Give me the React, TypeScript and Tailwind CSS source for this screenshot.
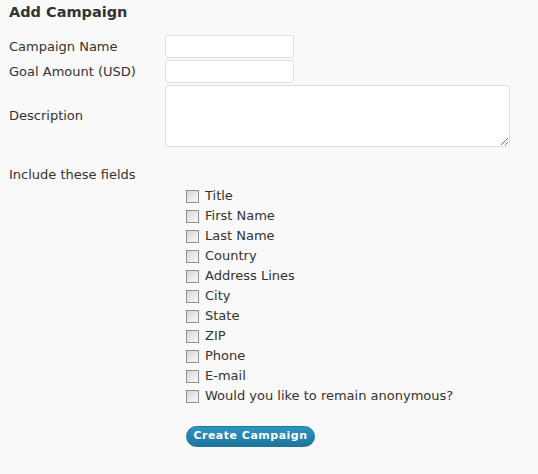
const fields = [
  "Title",
  "First Name",
  "Last Name",
  "Country",
  "Address Lines",
  "City",
  "State",
  "ZIP",
  "Phone",
  "E-mail",
  "Would you like to remain anonymous?",
];

function Checkbox() {
  return (
    <span className="block h-[13px] w-[13px] border border-[#8f8f8f] bg-gradient-to-br from-[#d6d6d6] to-[#fbfbfb]" />
  );
}

export default function App() {
  return (
    <div className="min-h-[474px] bg-[#f9f9f9] pl-[9px] pt-[2px] font-['DejaVu_Sans',Verdana,sans-serif] text-[13px] text-[#333]">
      <h2 className="h-[20px] text-[14.5px] font-bold leading-[20px] text-[#333]">Add Campaign</h2>

      <div className="mt-[13px] flex flex-col gap-[2px]">
        <div className="flex items-center">
          <label className="w-[156px]">Campaign Name</label>
          <input className="h-[23px] w-[129px] rounded-[3px] border border-[#dfdfdf] bg-white" />
        </div>
        <div className="flex items-center">
          <label className="w-[156px]">Goal Amount (USD)</label>
          <input className="h-[23px] w-[129px] rounded-[3px] border border-[#dfdfdf] bg-white" />
        </div>
        <div className="flex items-center">
          <label className="w-[156px]">Description</label>
          <textarea className="h-[62px] w-[345px] rounded-[3px] border border-[#dfdfdf] bg-white" />
        </div>
      </div>

      <p className="mt-[20px] leading-[16px]">Include these fields</p>

      <ul className="ml-[177px] mt-[3px] flex flex-col">
        {fields.map((f) => (
          <li key={f} className="flex h-[20px] items-center gap-[6px]">
            <Checkbox />
            <span>{f}</span>
          </li>
        ))}
      </ul>

      <button className="ml-[177px] mt-[20px] h-[21px] w-[129px] rounded-full border border-[#21759b] bg-gradient-to-b from-[#2a95c5] to-[#21759b] text-[11px] font-bold tracking-[0.5px] text-white">
        Create Campaign
      </button>
    </div>
  );
}
